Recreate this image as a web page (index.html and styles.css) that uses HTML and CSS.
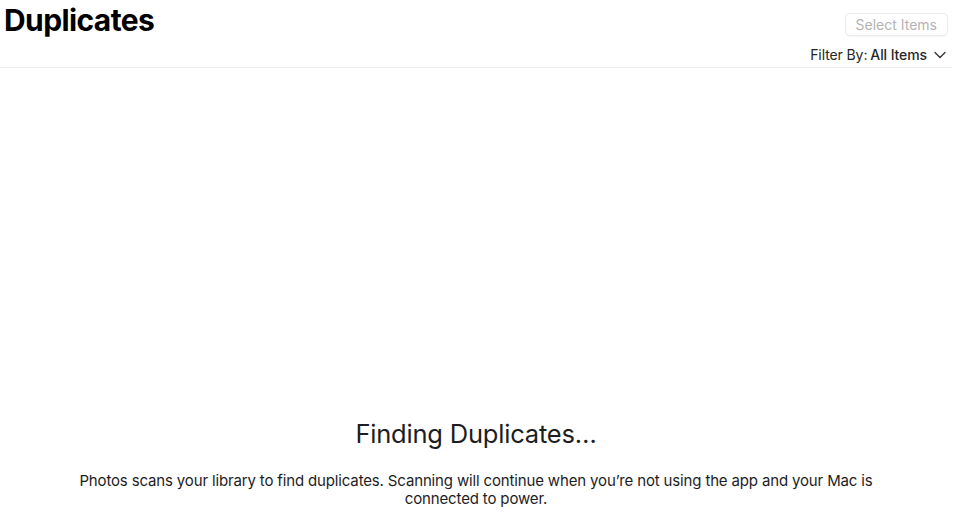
FILE: index.html
```html
<!DOCTYPE html>
<html lang="en">
<head>
  <meta charset="UTF-8">
  <title>Duplicates</title>
  <link rel="stylesheet" href="styles.css">
</head>
<body>
<div class="window">
  <!-- Header -->
  <div class="header">
    <h1 class="title">Duplicates</h1>
    <div class="header-controls">
      <button class="btn-select" disabled>Select Items</button>
      <div class="filter">
        <span class="filter-label">Filter By:</span>
        <span class="filter-value">All Items</span>
        <svg class="chevron" width="12" height="8" viewBox="0 0 12 8">
          <polyline points="1,1.5 6,6.5 11,1.5" fill="none" stroke="#333" stroke-width="1.3" stroke-linecap="round" stroke-linejoin="round"/>
        </svg>
      </div>
    </div>
  </div>

  <!-- Empty state -->
  <div class="content">
    <div class="status">
      <h2 class="status-title">Finding Duplicates…</h2>
      <p class="status-text">Photos scans your library to find duplicates. Scanning will continue when you’re not using the app and your Mac is connected to power.</p>
    </div>
  </div>
</div>
</body>
</html>
```

FILE: styles.css
```css
html, body {
  margin: 0;
  padding: 0;
  background: #fff;
}
body {
  font-family: Inter, "Noto Sans", "Liberation Sans", sans-serif;
  color: #1d1d1f;
}
.window {
  width: 952px;
  height: 525px;
  display: flex;
  flex-direction: column;
}
.header {
  display: flex;
  justify-content: space-between;
  align-items: flex-start;
  height: 68px;
  border-bottom: 1px solid #ececec;
  box-sizing: border-box;
}
.title {
  margin: 0;
  padding: 2px 0 0 4px;
  font-size: 30px;
  font-weight: 700;
  letter-spacing: -0.6px;
  color: #000;
}
.header-controls {
  display: flex;
  flex-direction: column;
  align-items: flex-end;
  padding: 13px 4px 0 0;
}
.btn-select {
  font-family: inherit;
  font-size: 14px;
  color: #b4b4b4;
  background: #fff;
  border: 1px solid #ebebeb;
  border-radius: 5px;
  height: 23px;
  padding: 0 10px;
  box-shadow: 0 0.5px 1px rgba(0,0,0,0.04);
}
.filter {
  display: flex;
  align-items: center;
  margin-top: 10px;
  font-size: 14px;
  letter-spacing: -0.1px;
  color: #262626;
}
.filter-label {
  margin-right: 3px;
}
.filter-value {
  font-weight: 500;
}
.chevron {
  margin-left: 7px;
  margin-right: 2px;
}
.content {
  flex: 1;
  display: flex;
  flex-direction: column;
  justify-content: flex-end;
}
.status {
  text-align: center;
  padding: 0 0 18px;
}
.status-title {
  margin: 0 0 23px;
  font-size: 25.5px;
  font-weight: 400;
  letter-spacing: -0.2px;
  color: #1d1d1f;
}
.status-text {
  max-width: 805px;
  margin: 0 auto;
  font-size: 15px;
  line-height: 17.5px;
  letter-spacing: -0.15px;
  color: #1d1d1f;
}
```
